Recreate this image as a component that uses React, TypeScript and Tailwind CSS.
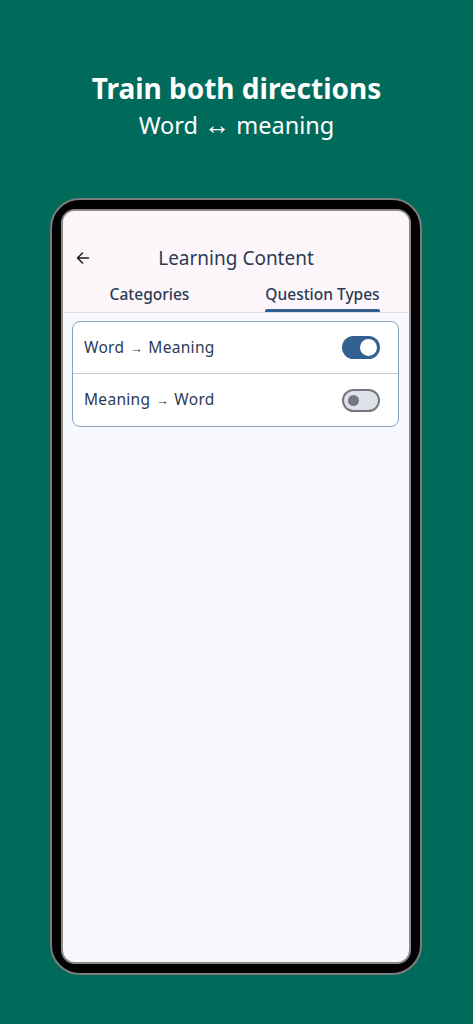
import React from 'react'

const font = { fontFamily: '"Noto Sans", "Open Sans", sans-serif' }

function Toggle({ on }: { on: boolean }) {
  return on ? (
    <div className="w-[38px] h-[23px] rounded-full bg-[#33618f] flex items-center justify-end px-[3px]">
      <div className="w-[17px] h-[17px] rounded-full bg-white" />
    </div>
  ) : (
    <div className="w-[38px] h-[23px] rounded-full bg-[#e0e2e9] border-2 border-[#74777f] flex items-center px-[4px]">
      <div className="w-[11px] h-[11px] rounded-full bg-[#74777f]" />
    </div>
  )
}

function Row({ from, to, on, last }: { from: string; to: string; on: boolean; last?: boolean }) {
  return (
    <div className={`h-[52px] flex items-center justify-between pl-[11px] pr-[18px] ${last ? '' : 'border-b border-[#c3cbd8]'}`}>
      <span className="text-[15.5px] text-[#2b3b55] tracking-[0.3px]">
        {from} <span className="text-[13px] mx-[1px]">→</span> {to}
      </span>
      <Toggle on={on} />
    </div>
  )
}

export default function App() {
  return (
    <div className="w-[473px] h-[1024px] bg-[#006b5b] flex flex-col items-center overflow-hidden" style={font}>
      {/* headline */}
      <div className="pt-[69px] text-center text-white">
        <h1 className="text-[28px] font-bold leading-[38px]">Train both directions</h1>
        <p className="text-[23.5px] leading-[32px] mt-[1px]">
          Word <span className="text-[26px]">↔</span> meaning
        </p>
      </div>

      {/* phone frame */}
      <div className="mt-[57px] w-[372px] h-[777px] rounded-[30px] border-2 border-[#7c7c7c] bg-black p-[9px] ml-[-1px]">
        <div className="w-full h-full rounded-[14px] border-2 border-[#8a8a8a] overflow-hidden bg-[#f8f9ff] flex flex-col">
          {/* app bar */}
          <div className="bg-[#fdf7fc] border-b border-[#dde0e6]">
            <div className="h-[26px]" />
            <div className="relative h-[42px] flex items-center justify-center">
              <svg
                className="absolute left-[12px] top-[13px]"
                width="16"
                height="16"
                viewBox="0 0 16 16"
                fill="none"
                stroke="#1c1b1f"
                strokeWidth="1.5"
                strokeLinecap="round"
                strokeLinejoin="round"
              >
                <path d="M13.5 8H2.5M7.5 3L2.5 8L7.5 13" />
              </svg>
              <span className="text-[19px] text-[#2b3b55]">Learning Content</span>
            </div>
            <div className="grid grid-cols-2 h-[33px]">
              <div className="flex items-start justify-center pt-[4px]">
                <span className="text-[15.5px] font-medium text-[#2b3b55]">Categories</span>
              </div>
              <div className="flex items-start justify-center pt-[4px]">
                <div className="flex flex-col items-center">
                  <span className="text-[15.5px] font-medium text-[#2b3b55] leading-[23px]">Question Types</span>
                  <div className="w-full h-[3px] bg-[#33618f] rounded-t-[2px] mt-[3px]" />
                </div>
              </div>
            </div>
          </div>

          {/* content */}
          <div className="px-[9px] pt-[8px] pr-[10px]">
            <div className="bg-white rounded-[8px] border-[1.5px] border-[#8ba2be]">
              <Row from="Word" to="Meaning" on />
              <Row from="Meaning" to="Word" on={false} last />
            </div>
          </div>
        </div>
      </div>
    </div>
  )
}
